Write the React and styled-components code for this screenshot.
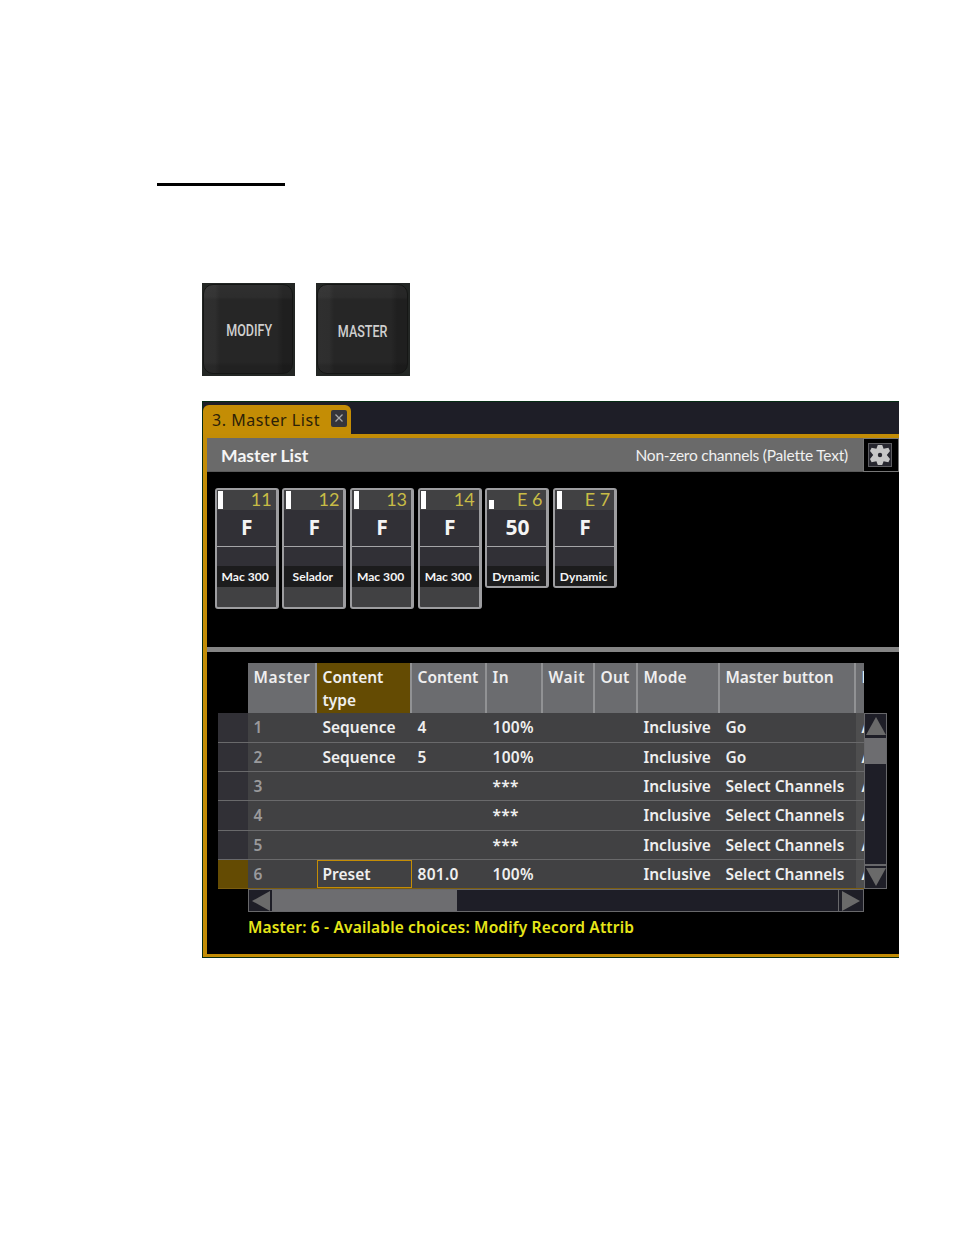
import React from "react";
import styled, { createGlobalStyle } from "styled-components";

const GlobalStyle = createGlobalStyle`
  * {
    box-sizing: border-box;
  }
  body {
    margin: 0;
    background: #fff;
  }
`;

const channels = [
  { id: "11", value: "F", name: "Mac 300", level: 18, tall: true },
  { id: "12", value: "F", name: "Selador", level: 18, tall: true },
  { id: "13", value: "F", name: "Mac 300", level: 18, tall: true },
  { id: "14", value: "F", name: "Mac 300", level: 18, tall: true },
  { id: "E 6", value: "50", name: "Dynamic", level: 9, tall: false },
  { id: "E 7", value: "F", name: "Dynamic", level: 18, tall: false },
];

const columns = [
  { key: "master", title: "Master", width: 69, spacing: 0.6 },
  { key: "type", title: "Content type", width: 95, spacing: 0 },
  { key: "content", title: "Content", width: 75, spacing: 0 },
  { key: "in", title: "In", width: 56, spacing: 0.5 },
  { key: "wait", title: "Wait", width: 52, spacing: 0.6 },
  { key: "out", title: "Out", width: 43, spacing: 0.2 },
  { key: "mode", title: "Mode", width: 82, spacing: 0.1 },
  { key: "button", title: "Master button", width: 136, spacing: -0.05 },
  { key: "fader", title: "F type", width: 80, spacing: 0 },
];

const rows = [
  { master: "1", type: "Sequence", content: "4", in: "100%", mode: "Inclusive", button: "Go", fader: "A" },
  { master: "2", type: "Sequence", content: "5", in: "100%", mode: "Inclusive", button: "Go", fader: "A" },
  { master: "3", in: "***", mode: "Inclusive", button: "Select Channels", fader: "A" },
  { master: "4", in: "***", mode: "Inclusive", button: "Select Channels", fader: "A" },
  { master: "5", in: "***", mode: "Inclusive", button: "Select Channels", fader: "A" },
  { master: "6", type: "Preset", content: "801.0", in: "100%", mode: "Inclusive", button: "Select Channels", fader: "A" },
];

function ChannelCard({ channel }) {
  return (
    <Card $tall={channel.tall}>
      <CardTop>
        <Level $height={channel.level} />
        <CardId>{channel.id}</CardId>
      </CardTop>
      <CardValue>{channel.value}</CardValue>
      <CardGap />
      <CardName>{channel.name}</CardName>
    </Card>
  );
}

function MasterTable() {
  return (
    <TableArea>
      <TableHead>
        {columns.map((col) => (
          <HeadCell key={col.key} $width={col.width} $spacing={col.spacing} $active={col.key === "type"}>
            {col.title}
          </HeadCell>
        ))}
      </TableHead>
      <TableBody>
        <Rows>
          {rows.map((row) => {
            const active = row.master === "6";
            return (
              <Row key={row.master} $active={active} $first={row.master === "1"}>
                <RowHandle $active={active} />
                {columns.map((col) => (
                  <Cell
                    key={col.key}
                    $width={col.width}
                    $dim={col.key === "master"}
                    $last={col.key === "fader"}
                    $wide={col.key === "in" || col.key === "content"}
                    $focus={active && col.key === "type"}
                  >
                    {row[col.key]}
                  </Cell>
                ))}
              </Row>
            );
          })}
        </Rows>
        <VScroll>
          <VArrow>
            <svg width="20" height="18" viewBox="0 0 20 18">
              <path d="M10 0 L20 18 H0 Z" fill="#6a6a6a" />
            </svg>
          </VArrow>
          <VThumb />
          <VTrack />
          <VArrow $end>
            <svg width="20" height="18" viewBox="0 0 20 18">
              <path d="M0 0 H20 L10 18 Z" fill="#6a6a6a" />
            </svg>
          </VArrow>
        </VScroll>
      </TableBody>
      <HScroll>
        <HArrow>
          <svg width="18" height="20" viewBox="0 0 18 20">
            <path d="M18 0 V20 L0 10 Z" fill="#6a6a6a" />
          </svg>
        </HArrow>
        <HThumb />
        <HTrack />
        <HArrow $end>
          <svg width="18" height="20" viewBox="0 0 18 20">
            <path d="M0 0 V20 L18 10 Z" fill="#6a6a6a" />
          </svg>
        </HArrow>
      </HScroll>
    </TableArea>
  );
}

export default function App() {
  return (
    <Page>
      <GlobalStyle />
      <Rule />
      <Keys>
        <Key $width={93}>
          <KeyCap $pad={2}>
            <KeyText $scale={0.76}>MODIFY</KeyText>
          </KeyCap>
        </Key>
        <Key $width={94}>
          <KeyCap $pad={0} $drop={2}>
            <KeyText $scale={0.76}>MASTER</KeyText>
          </KeyCap>
        </Key>
      </Keys>
      <Window>
        <TabBar>
          <Tab>
            <TabText>3. Master List</TabText>
            <Close>
              <svg width="8" height="8" viewBox="0 0 8 8">
                <path d="M0.5 0.5 L7.5 7.5 M7.5 0.5 L0.5 7.5" stroke="#a9a9a9" strokeWidth="1.3" />
              </svg>
            </Close>
          </Tab>
        </TabBar>
        <Content>
          <TitleBar>
            <Title>Master List</Title>
            <Filter>Non-zero channels (Palette Text)</Filter>
            <Settings>
              <SettingsIcon>
                <svg width="22" height="22" viewBox="-11 -11 22 22">
                  <path
                    d="M-2.2 -10 H2.2 L3.6 -6.2 L8.4 -7.2 L10 -4 L6.8 0 L10 4 L8.4 7.2 L3.6 6.2 L2.2 10 H-2.2 L-3.6 6.2 L-8.4 7.2 L-10 4 L-6.8 0 L-10 -4 L-8.4 -7.2 L-3.6 -6.2 Z"
                    fill="#c6c6c6"
                  />
                  <circle r="2.2" fill="#26262e" />
                </svg>
              </SettingsIcon>
            </Settings>
          </TitleBar>
          <Cards>
            {channels.map((channel) => (
              <ChannelCard key={channel.id} channel={channel} />
            ))}
          </Cards>
          <Divider />
          <MasterTable />
          <Status>Master: 6 - Available choices: Modify Record Attrib</Status>
        </Content>
      </Window>
    </Page>
  );
}

const Page = styled.div`
  width: 954px;
  height: 1235px;
  padding-top: 183px;
  background: #fff;
  overflow: hidden;
`;

const Rule = styled.div`
  width: 128px;
  height: 3px;
  margin-left: 157px;
  background: #000;
`;

const Keys = styled.div`
  display: flex;
  gap: 21px;
  margin: 97px 0 25px 202px;
`;

const Key = styled.div`
  width: ${(p) => p.$width}px;
  height: 93px;
  padding: 1px 2px 2px 1px;
  background: #232624;
`;

const KeyCap = styled.div`
  display: flex;
  align-items: center;
  justify-content: center;
  height: 100%;
  padding: ${(p) => 4 + (p.$drop || 0)}px 0 0 ${(p) => p.$pad}px;
  border: 1px solid #151615;
  border-radius: 10px;
  background:
    linear-gradient(#ffffff0b, #ffffff08 12px, #ffffff00 15px),
    linear-gradient(#00000000 77px, #00000022 81px),
    linear-gradient(90deg, #2f2f2f 0, #2e2e2e 11px, #262626 16px, #262626 73px, #1f1f1f 79px, #1f1f1f 100%);
`;

const KeyText = styled.div`
  font-family: Roboto, "Liberation Sans", sans-serif;
  font-size: 16.5px;
  font-weight: 500;
  line-height: 20px;
  color: #cfcfcf;
  transform: scaleX(${(p) => p.$scale});
`;

const Window = styled.div`
  width: 697px;
  height: 557px;
  margin-left: 202px;
  border: 1px solid #062c14;
  border-right: none;
  background: #1e1e27;
  overflow: hidden;
`;

const TabBar = styled.div`
  display: flex;
  height: 32px;
  padding-top: 3px;
`;

const Tab = styled.div`
  display: flex;
  align-items: center;
  width: 148px;
  padding: 0 4px 0 9px;
  border-radius: 6px 6px 0 0;
  background: #c48d05;
`;

const TabText = styled.div`
  flex: 1;
  font-family: "Noto Sans", sans-serif;
  font-size: 16px;
  line-height: 20px;
  letter-spacing: 0.55px;
  color: #2c2108;
  white-space: nowrap;
`;

const Close = styled.div`
  display: flex;
  align-items: center;
  justify-content: center;
  width: 16px;
  height: 17px;
  margin-bottom: 3px;
  border-radius: 2px;
  background: #35353b;
`;

const Content = styled.div`
  height: 523px;
  border: solid #c28c06;
  border-width: 4px 0 3px 4px;
  background: #000;
`;

const TitleBar = styled.div`
  display: flex;
  align-items: center;
  height: 34px;
  padding-left: 14px;
  background: #6a6a6a;
  border-bottom: 1px solid #5a5a5a;
`;

const Title = styled.div`
  flex: 1;
  padding-top: 2px;
  font-family: Lato, sans-serif;
  font-weight: 700;
  font-size: 17.6px;
  line-height: 22px;
  color: #f5f5f5;
`;

const Filter = styled.div`
  margin-right: 15px;
  font-family: Lato, sans-serif;
  font-size: 15.5px;
  line-height: 20px;
  letter-spacing: -0.22px;
  color: #f0f0f0;
`;

const Settings = styled.div`
  display: flex;
  align-items: center;
  justify-content: center;
  width: 36px;
  height: 34px;
  border: 1px solid #777;
  background: #000;
`;

const SettingsIcon = styled.div`
  display: flex;
  align-items: center;
  justify-content: center;
  width: 24px;
  height: 24px;
  margin-right: 2px;
  border: 1px solid #5c5c60;
  background: #26262e;
`;

const Cards = styled.div`
  display: flex;
  align-items: flex-start;
  gap: 3.7px;
  height: 175px;
  padding: 16px 0 0 7.7px;
`;

const Card = styled.div`
  width: 64px;
  height: ${(p) => (p.$tall ? 121 : 100)}px;
  border: 2px solid #9d9da0;
  border-right-width: 3px;
  border-radius: 3px;
  background: #414143;
  overflow: hidden;
`;

const CardTop = styled.div`
  display: flex;
  align-items: flex-end;
  justify-content: space-between;
  height: 20px;
  padding: 0 4px 1px 1.5px;
  background: #414143;
`;

const Level = styled.div`
  width: 5px;
  height: ${(p) => p.$height}px;
  background: #fff;
`;

const CardId = styled.div`
  padding-bottom: 1px;
  font-family: Lato, sans-serif;
  font-size: 18px;
  line-height: 18px;
  color: #c8bc46;
`;

const CardValue = styled.div`
  height: 37px;
  padding-left: 1px;
  border-bottom: 1px solid #a5a5a8;
  background: #313036;
  font-family: "Open Sans", sans-serif;
  font-weight: 700;
  font-size: 21px;
  line-height: 35px;
  text-align: center;
  color: #f4f4f4;
`;

const CardGap = styled.div`
  height: 19px;
  background: #313036;
`;

const CardName = styled.div`
  height: 21px;
  padding-right: 2px;
  background: #1c1c1d;
  font-family: Lato, sans-serif;
  font-weight: 700;
  font-size: 12.1px;
  line-height: 22px;
  text-align: center;
  white-space: nowrap;
  color: #f4f4f4;
`;

const Divider = styled.div`
  height: 5px;
  background: #858585;
`;

const TableArea = styled.div`
  display: flex;
  flex-direction: column;
  padding: 11px 0 0 11px;
  font-family: "Noto Sans", sans-serif;
  font-weight: 600;
  font-size: 15.5px;
`;

const TableHead = styled.div`
  display: flex;
  width: 616px;
  height: 50px;
  margin-left: 30px;
  overflow: hidden;
`;

const HeadCell = styled.div`
  flex: 0 0 ${(p) => p.$width}px;
  padding: 3px 0 0 5.5px;
  border-right: 2px solid #919294;
  background: ${(p) => (p.$active ? "#644b03" : "#6b6c6f")};
  line-height: 22.5px;
  letter-spacing: ${(p) => p.$spacing}px;
  color: #efefef;
`;

const TableBody = styled.div`
  display: flex;
  height: 176px;
`;

const Rows = styled.div`
  width: 646px;
  overflow: hidden;
`;

const Row = styled.div`
  display: flex;
  height: ${(p) => (p.$first ? 30 : 29.2)}px;
  border-bottom: 1px solid ${(p) => (p.$active ? "#7a5c10" : "#69696b")};
  background: #414143;
`;

const RowHandle = styled.div`
  flex: 0 0 30px;
  background: ${(p) => (p.$active ? "#644b03" : "#313036")};
`;

const Cell = styled.div`
  flex: 0 0 ${(p) => p.$width}px;
  padding-left: ${(p) => (p.$focus ? 4.5 : 5.5)}px;
  border: ${(p) => (p.$focus ? "1px solid #c48d05" : "none")};
  background: ${(p) => (p.$last ? "#4e4e4f" : "transparent")};
  line-height: ${(p) => (p.$focus ? 26.5 : 28.5)}px;
  letter-spacing: ${(p) => (p.$wide ? 0.3 : 0)}px;
  white-space: nowrap;
  color: ${(p) => (p.$dim ? "#9a9a9c" : "#efefef")};
`;

const VScroll = styled.div`
  display: flex;
  flex-direction: column;
  width: 23px;
  border: 1px solid #68686b;
  background: #1e1e27;
`;

const VArrow = styled.div`
  display: flex;
  align-items: center;
  justify-content: center;
  height: 24px;
  border-top: ${(p) => (p.$end ? "2px solid #68686b" : "none")};
`;

const VThumb = styled.div`
  height: 26px;
  background: #6d6d70;
`;

const VTrack = styled.div`
  flex: 1;
`;

const HScroll = styled.div`
  display: flex;
  width: 616px;
  height: 23px;
  margin-left: 30px;
  border: 1px solid #68686b;
  background: #1e1e27;
`;

const HArrow = styled.div`
  display: flex;
  align-items: center;
  justify-content: center;
  width: ${(p) => (p.$end ? 25 : 23)}px;
  border-left: ${(p) => (p.$end ? "1px solid #68686b" : "none")};
`;

const HThumb = styled.div`
  width: 185px;
  background: #6d6d70;
`;

const HTrack = styled.div`
  flex: 1;
`;

const Status = styled.div`
  padding: 4px 0 0 41px;
  font-family: "Noto Sans", sans-serif;
  font-weight: 600;
  font-size: 15.5px;
  line-height: 22px;
  letter-spacing: 0.17px;
  white-space: nowrap;
  color: #e6e619;
`;
